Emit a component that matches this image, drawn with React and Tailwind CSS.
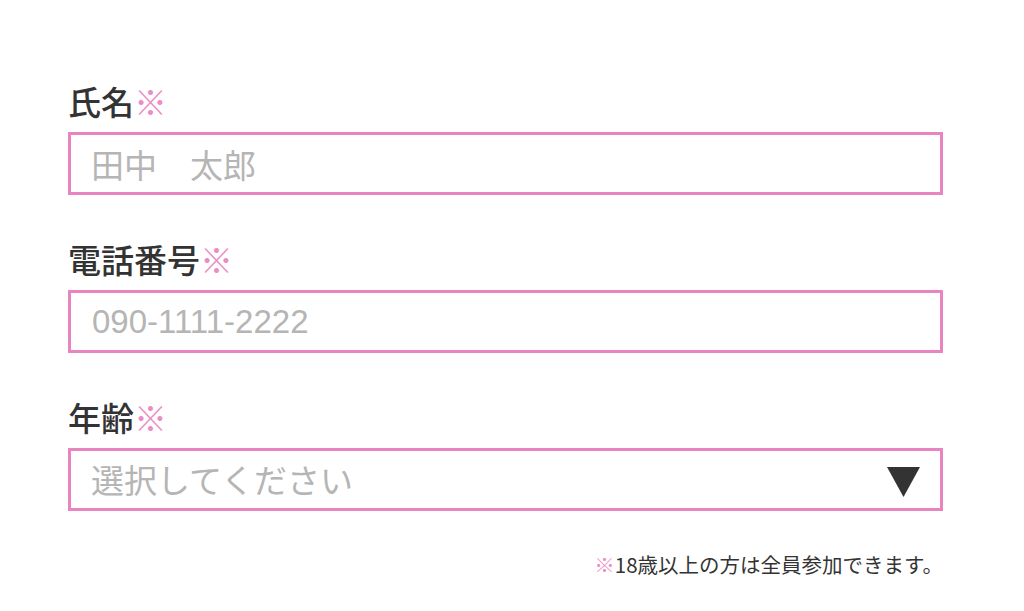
import React, { useState } from 'react'

const FONT = { fontFamily: '"Noto Sans CJK JP", "Noto Sans", sans-serif' }

function Label({ children }) {
  return (
    <label className="block h-[44px] text-[33px] leading-[44px] font-medium text-[#333333] mb-[9px]">
      {children}
      <span className="text-[#ec8cc4]">※</span>
    </label>
  )
}

function App() {
  const [name, setName] = useState('')
  const [tel, setTel] = useState('')
  const [age, setAge] = useState('')

  return (
    <div className="min-h-screen bg-white" style={FONT}>
      <form className="ml-[68px] w-[875px] pt-[79px] flex flex-col">
        <div>
          <Label>氏名</Label>
          <input
            type="text"
            value={name}
            onChange={(e) => setName(e.target.value)}
            placeholder="田中　太郎"
            className="block w-full h-[63px] border-[3px] border-[#e884c0] pl-[20px] text-[33px] text-[#333333] placeholder:text-[#b5b5b5] outline-none"
          />
        </div>

        <div className="mt-[42px]">
          <Label>電話番号</Label>
          <input
            type="tel"
            value={tel}
            onChange={(e) => setTel(e.target.value)}
            placeholder="090-1111-2222"
            className="block w-full h-[63px] border-[3px] border-[#e884c0] pl-[21px] text-[33px] text-[#333333] placeholder:text-[#b5b5b5] outline-none"
            style={{ fontFamily: '"Liberation Sans", Arial, sans-serif' }}
          />
        </div>

        <div className="mt-[42px]">
          <Label>年齢</Label>
          <div className="relative h-[63px] border-[3px] border-[#e884c0]">
            <select
              value={age}
              onChange={(e) => setAge(e.target.value)}
              className={`appearance-none w-full h-full bg-transparent pl-[20px] text-[33px] outline-none ${age ? 'text-[#333333]' : 'text-[#b5b5b5]'}`}
            >
              <option value="">選択してください</option>
              <option value="18">18〜29歳</option>
              <option value="30">30〜39歳</option>
              <option value="40">40〜49歳</option>
              <option value="50">50歳以上</option>
            </select>
            <svg
              className="absolute right-[20px] top-[16px] pointer-events-none"
              width="33"
              height="30"
              viewBox="0 0 33 30"
            >
              <polygon points="0,0 33,0 16.5,30" fill="#333333" />
            </svg>
          </div>
        </div>

        <p className="mt-[38px] text-right text-[20.5px] leading-[30px] text-[#333333]">
          <span className="text-[#ec8cc4]">※</span>18歳以上の方は全員参加できます。
        </p>
      </form>
    </div>
  )
}

export default App
